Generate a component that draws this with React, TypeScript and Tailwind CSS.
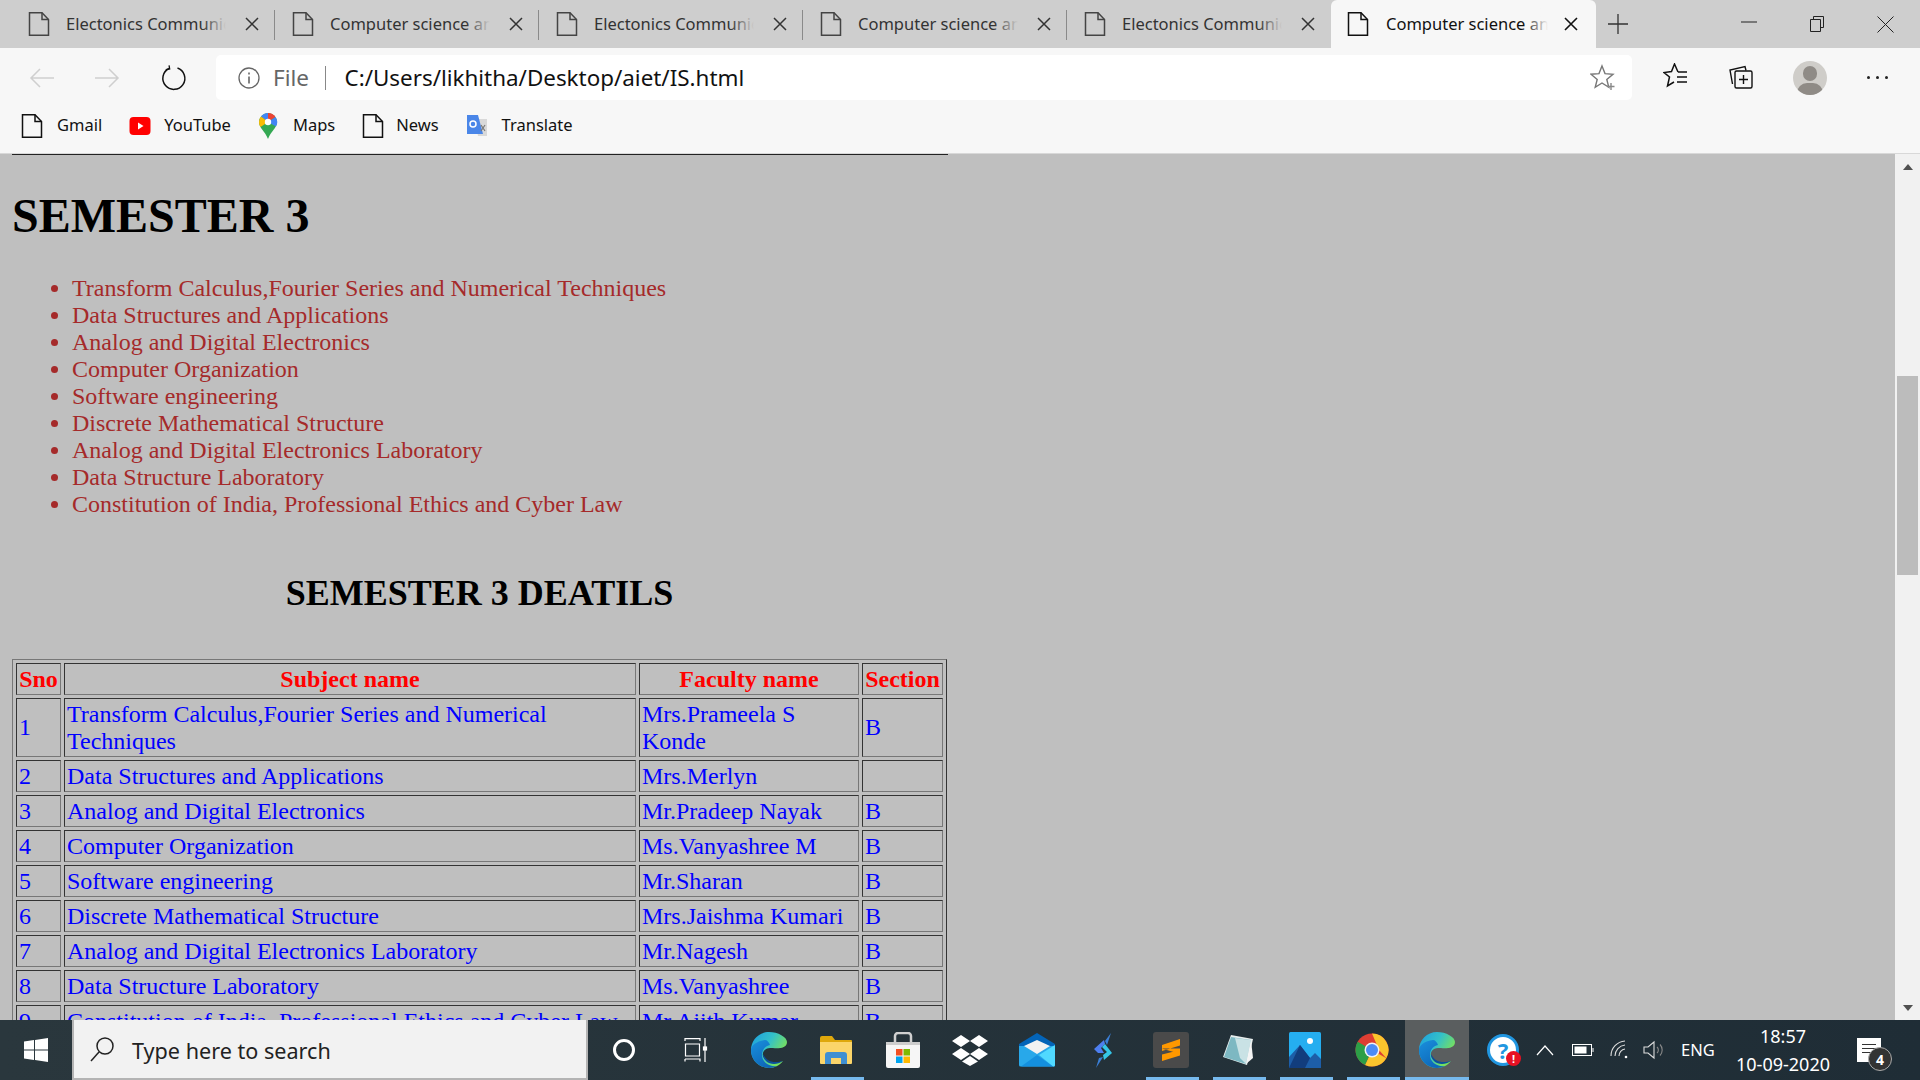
import type { ReactNode } from "react";

const uiFont = "font-['Noto_Sans',sans-serif]";

const subjects = [
  "Transform Calculus,Fourier Series and Numerical Techniques",
  "Data Structures and Applications",
  "Analog and Digital Electronics",
  "Computer Organization",
  "Software engineering",
  "Discrete Mathematical Structure",
  "Analog and Digital Electronics Laboratory",
  "Data Structure Laboratory",
  "Constitution of India, Professional Ethics and Cyber Law",
];

const rows = [
  { sno: "1", subject: subjects[0], faculty: "Mrs.Prameela S Konde", section: "B" },
  { sno: "2", subject: subjects[1], faculty: "Mrs.Merlyn", section: "" },
  { sno: "3", subject: subjects[2], faculty: "Mr.Pradeep Nayak", section: "B" },
  { sno: "4", subject: subjects[3], faculty: "Ms.Vanyashree M", section: "B" },
  { sno: "5", subject: subjects[4], faculty: "Mr.Sharan", section: "B" },
  { sno: "6", subject: subjects[5], faculty: "Mrs.Jaishma Kumari", section: "B" },
  { sno: "7", subject: subjects[6], faculty: "Mr.Nagesh", section: "B" },
  { sno: "8", subject: subjects[7], faculty: "Ms.Vanyashree", section: "B" },
  { sno: "9", subject: subjects[8], faculty: "Mr.Ajith Kumar", section: "B" },
];

const tabs = [
  "Electonics Communication",
  "Computer science and engineering",
  "Electonics Communication",
  "Computer science and engineering",
  "Electonics Communication",
];

function DocIcon({ color = "#333333", size = 24 }: { color?: string; size?: number }) {
  return (
    <svg width={size} height={size} viewBox="0 0 24 24" fill="none" stroke={color} strokeWidth="1.500">
      <path d="M2.500.8h12.500l6.500 6.700v15.700h-19z" />
      <path d="M15 .8v6.700h6.500" />
    </svg>
  );
}

function Tab({ title, active, last }: { title: string; active?: boolean; last?: boolean }) {
  if (active) {
    return (
      <div className="relative flex h-12 w-[265px] shrink-0 items-center rounded-t-[6px] bg-[#f7f7f7] pl-[15px]">
        <DocIcon color="#111111" />
        <div className="ml-[16px] w-[162px] overflow-hidden whitespace-nowrap text-[16.5px] text-[#111]">{title}</div>
        <div className="absolute left-[193px] top-2 h-8 w-[24px] bg-gradient-to-r from-transparent to-[#f7f7f7]" />
        <svg className="ml-[16px]" width="14" height="14" viewBox="0 0 14 14" stroke="#111" strokeWidth="1.600">
          <path d="M1 1l12 12M13 1L1 13" />
        </svg>
      </div>
    );
  }
  return (
    <div className="relative flex h-12 w-[264px] shrink-0 items-center pl-[16px]">
      <DocIcon color="#444444" />
      <div className="ml-[15px] w-[160px] overflow-hidden whitespace-nowrap text-[16.5px] text-[#333]">{title}</div>
      <div className="absolute left-[191px] top-2 h-8 w-[24px] bg-gradient-to-r from-transparent to-[#cecece]" />
      <svg className="ml-[19px]" width="14" height="14" viewBox="0 0 14 14" stroke="#333" strokeWidth="1.500">
        <path d="M1 1l12 12M13 1L1 13" />
      </svg>
      {!last && <div className="absolute right-0 top-[10px] h-[30px] w-px bg-[#8a8a8a]" />}
    </div>
  );
}

function TabStrip() {
  return (
    <div className={`flex h-12 shrink-0 items-center bg-[#cecece] pl-[11px] ${uiFont}`}>
      {tabs.map((t, i) => (
        <Tab key={i} title={t} last={i === tabs.length - 1} />
      ))}
      <Tab title="Computer science and engineering" active />
      <svg className="ml-[12px]" width="20" height="20" viewBox="0 0 20 20" stroke="#333" strokeWidth="1.300">
        <path d="M10 0v20M0 10h20" />
      </svg>
      <div className="ml-auto flex items-center">
        <div className="flex w-[68px] justify-center pr-[2px]">
          <svg width="16" height="16" viewBox="0 0 16 16" stroke="#222" strokeWidth="1">
            <path d="M0 6h16" />
          </svg>
        </div>
        <div className="flex w-[68px] justify-center pr-[2px]">
          <svg width="16" height="18" viewBox="0 0 16 18" fill="none" stroke="#222" strokeWidth="1">
            <path d="M1.500 4.500h10v12h-10z" />
            <path d="M4.500 4.500v-3h10v11h-3" />
          </svg>
        </div>
        <div className="flex w-[68px] justify-center pr-[1px]">
          <svg width="17" height="17" viewBox="0 0 17 17" stroke="#222" strokeWidth="1">
            <path d="M.5.5l16 16M16.500.5l-16 16" />
          </svg>
        </div>
      </div>
    </div>
  );
}

function Toolbar() {
  return (
    <div className={`flex h-[60px] shrink-0 items-center bg-[#f7f7f7] pb-[1px] ${uiFont}`}>
      <div className="flex w-[216px] shrink-0 items-center">
        <svg className="ml-[29px]" width="26" height="22" viewBox="0 0 26 22" fill="none" stroke="#cfcfcf" strokeWidth="1.500">
          <path d="M25 11H2M11 2l-9 9 9 9" />
        </svg>
        <svg className="ml-[39px]" width="26" height="22" viewBox="0 0 26 22" fill="none" stroke="#cfcfcf" strokeWidth="1.500">
          <path d="M1 11h23M15 2l9 9-9 9" />
        </svg>
        <svg className="ml-[41px]" width="26" height="26" viewBox="0 0 26 26" fill="none" stroke="#111" strokeWidth="1.500">
          <path d="M8 3.500a11 11 0 1 0 8.500-.5" />
          <path d="M8.500 0.500v3.500h-4" strokeWidth="1.300" transform="rotate(-10 8 3)" />
        </svg>
      </div>
      <div className="flex h-[45px] w-[1416px] shrink-0 items-center rounded-[5px] bg-white pl-[21px] pr-[16px]">
        <svg width="24" height="24" viewBox="0 0 24 24" fill="none" stroke="#666" strokeWidth="1.300">
          <circle cx="12" cy="12" r="10" />
          <path d="M12 10.500v7M12 6.500v2" strokeWidth="1.600" />
        </svg>
        <span className="ml-[12px] text-[22.5px] text-[#666]">File</span>
        <div className="ml-[16px] h-[24px] w-[1.5px] bg-[#888]" />
        <span className="ml-[18px] whitespace-nowrap text-[22.4px] text-[#111]">C:/Users/likhitha/Desktop/aiet/IS.html</span>
        <svg className="ml-auto -mt-[2px]" width="26" height="26" viewBox="0 0 26 26" fill="none" stroke="#777" strokeWidth="1.400">
          <path d="M12 2l3 7.600 8 .6-6.200 5.200 2 7.900L12 19l-6.800 4.300 2-7.900L1 10.200l8-.6z" />
          <path d="M21 19v7M17.500 22.500h7" stroke="#888" />
        </svg>
      </div>
      <svg className="ml-[31px] -mt-[3px]" width="26" height="26" viewBox="0 0 26 26" fill="none" stroke="#111" strokeWidth="1.500">
        <path d="M15 9L11.500 1 8.500 8.500 1 9.500 6.500 14 4.500 23 11 19" />
        <path d="M15 9h9M14 14h10M14 19h10" />
      </svg>
      <svg className="ml-[40px] -mt-[2px]" width="24" height="26" viewBox="0 0 24 26" fill="none" stroke="#111" strokeWidth="1.400">
        <path d="M3.500 20L1 6l15-3.500 1 4" />
        <rect x="6" y="7" width="17" height="17" rx="1.500" />
        <path d="M14.500 11v9M10 15.500h9" />
      </svg>
      <div className="relative ml-[40px] h-[34px] w-[34px] overflow-hidden rounded-full bg-[#cfcdc9]">
        <div className="absolute left-[10px] top-[5px] h-[15px] w-[14px] rounded-full bg-[#8f8b86]" />
        <div className="absolute left-[4px] top-[22px] h-[20px] w-[26px] rounded-full bg-[#8f8b86]" />
      </div>
      <div className="ml-[40px] flex gap-[6px]">
        <div className="h-[3px] w-[3px] rounded-full bg-[#222]" />
        <div className="h-[3px] w-[3px] rounded-full bg-[#222]" />
        <div className="h-[3px] w-[3px] rounded-full bg-[#222]" />
      </div>
    </div>
  );
}

function Bookmark({ icon, label, gap }: { icon: ReactNode; label: string; gap: string }) {
  return (
    <div className="flex items-center">
      {icon}
      <span className={`${gap} text-[16.5px] text-[#111]`}>{label}</span>
    </div>
  );
}

function Bookmarks() {
  return (
    <div className={`flex h-[46px] shrink-0 items-center gap-[26px] border-b border-[#d8d8d8] bg-[#f7f7f7] pb-[10px] pl-[20px] ${uiFont}`}>
      <Bookmark icon={<DocIcon color="#111111" />} label="Gmail" gap="ml-[13px]" />
      <Bookmark
        icon={
          <svg width="24" height="20" viewBox="0 0 24 20">
            <rect x="1.500" y="1" width="21" height="18" rx="4" fill="#f00" />
            <path d="M10 6.500l5.500 3.500-5.500 3.500z" fill="#fff" />
          </svg>
        }
        label="YouTube"
        gap="ml-[12px]"
      />
      <Bookmark
        icon={
          <svg width="22" height="28" viewBox="0 0 22 28">
            <path d="M11 1a9 9 0 0 1 9 9c0 6-6 9-9 17-3-8-9-11-9-17a9 9 0 0 1 9-9z" fill="#34a853" />
            <path d="M4 4.500A9 9 0 0 1 11 1v9z" fill="#4285f4" />
            <path d="M11 1a9 9 0 0 1 7.500 4l-7.500 5z" fill="#ea4335" />
            <path d="M18.500 5a9 9 0 0 1 .5 9.500L11 10z" fill="#4285f4" />
            <path d="M2 10a9 9 0 0 1 2-5.500L11 10l-7.500 5A9 9 0 0 1 2 10z" fill="#fbbc04" />
            <circle cx="11" cy="10" r="3.200" fill="#fff" />
          </svg>
        }
        label="Maps"
        gap="ml-[14px]"
      />
      <Bookmark icon={<DocIcon color="#111111" />} label="News" gap="ml-[11px]" />
      <Bookmark
        icon={
          <svg width="24" height="26" viewBox="0 0 24 26">
            <path d="M10 6h12v17H13z" fill="#d9d9d9" />
            <path d="M2 2h11l5 19H2z" fill="#4a86e8" />
            <circle cx="8" cy="11" r="3" fill="none" stroke="#fff" strokeWidth="1.500" />
            <path d="M16 12l4 6M20 12l-4 6" stroke="#777" strokeWidth="1.200" />
          </svg>
        }
        label="Translate"
        gap="ml-[13px]"
      />
    </div>
  );
}

function Cell({ children, head }: { children?: ReactNode; head?: boolean }) {
  const Tag = head ? "th" : "td";
  return (
    <Tag
      className={`border border-t-[#333] border-l-[#333] border-r-[#777] border-b-[#777] px-[2px] py-[1.5px] leading-[27px] ${
        head ? "text-center font-bold text-[#f00]" : "text-left font-normal text-[#00f]"
      }`}
    >
      {children}
    </Tag>
  );
}

function PageContent() {
  return (
    <div className="h-full flex-1 overflow-hidden bg-[#bfbfbf] pl-3 font-['Liberation_Serif',serif] text-black">
      <div className="h-px w-[936px] bg-[#222]" />
      <h1 className="mt-[33px] text-[48px] font-bold leading-[55px]">SEMESTER 3</h1>
      <ul className="mt-[32px] list-disc pl-[60px] text-[24px] leading-[27px] text-[#a52a2a]">
        {subjects.map((s) => (
          <li key={s}>{s}</li>
        ))}
      </ul>
      <h2 className="mb-[45px] mt-[55px] w-[935px] text-center text-[36px] font-bold leading-[41px]">SEMESTER 3 DEATILS</h2>
      <table className="w-[935px] table-fixed border-separate border-spacing-[3px] border border-t-[#777] border-l-[#777] border-r-[#333] border-b-[#333] text-[24px]">
        <colgroup>
          <col className="w-[45px]" />
          <col className="w-[572px]" />
          <col className="w-[220px]" />
          <col className="w-[81px]" />
        </colgroup>
        <thead>
          <tr>
            <Cell head>Sno</Cell>
            <Cell head>Subject name</Cell>
            <Cell head>Faculty name</Cell>
            <Cell head>Section</Cell>
          </tr>
        </thead>
        <tbody>
          {rows.map((r) => (
            <tr key={r.sno}>
              <Cell>{r.sno}</Cell>
              <Cell>{r.subject}</Cell>
              <Cell>{r.faculty}</Cell>
              <Cell>{r.section}</Cell>
            </tr>
          ))}
        </tbody>
      </table>
    </div>
  );
}

function Scrollbar() {
  return (
    <div className="flex h-full w-[25px] shrink-0 flex-col items-center bg-[#f1f1f1]">
      <div className="mt-[10px] h-0 w-0 border-x-[5px] border-b-[6px] border-x-transparent border-b-[#505050]" />
      <div className="mt-[206px] h-[199px] w-[21px] bg-[#bcbcbc]" />
      <div className="mt-auto mb-[9px] h-0 w-0 border-x-[5px] border-t-[6px] border-x-transparent border-t-[#505050]" />
    </div>
  );
}

function EdgeIcon() {
  return (
    <svg width="36" height="36" viewBox="0 0 36 36">
      <defs>
        <linearGradient id="edgeTop" x1="0" y1="0" x2="1" y2="0.600">
          <stop offset="0" stopColor="#1b9de2" />
          <stop offset="0.500" stopColor="#34c1c8" />
          <stop offset="0.900" stopColor="#78e05c" />
        </linearGradient>
        <linearGradient id="edgeLeft" x1="0" y1="0" x2="0.600" y2="1">
          <stop offset="0" stopColor="#1a90dd" />
          <stop offset="1" stopColor="#0d66b8" />
        </linearGradient>
      </defs>
      <path d="M18 0C8 0 0 8 0 18c0 10 8 18 18 18 6 0 11-3 14-7-6 3-17 3-20-5-1-4 2-8 7-8 5 0 17 2 17-6C36 5 27 0 18 0z" fill="url(#edgeTop)" />
      <path d="M14 8C6 9 0 13 0 18c0 10 8 18 18 18 3 0 6-1 8-2-8 1-15-4-15-11 0-5 3-9 8-10-1-3-3-5-5-5z" fill="url(#edgeLeft)" />
      <path d="M12 22c0 6 5 10 11 10 3 0 6-1 9-3-4 1-11 2-15-1-3-2-5-6-5-6z" fill="#0b4f9c" />
    </svg>
  );
}

function Slot({ children, running, width = "w-[67px]", active, className = "" }: { children: ReactNode; running?: boolean; width?: string; active?: boolean; className?: string }) {
  return (
    <div className={`relative flex h-[60px] shrink-0 items-center justify-center ${width} ${active ? "bg-[#5a5e5f]" : ""} ${className}`}>
      {children}
      {running && <div className={`absolute bottom-0 h-[3px] bg-[#76b9ed] ${active ? "inset-x-0" : "left-[9px] right-[5px]"}`} />}
    </div>
  );
}

function Taskbar() {
  return (
    <div className={`flex h-[60px] shrink-0 items-center bg-gradient-to-r from-[#2a373d] to-[#1f2d36] text-white ${uiFont}`}>
      <div className="flex h-full w-[72px] shrink-0 items-center justify-center">
        <svg width="24" height="24" viewBox="0 0 24 24" fill="#fff">
          <path d="M0 3.500l10-1.400v9.300H0zM11 2l13-2v11.400H11zM0 12.500h10v9.400l-10-1.400zM11 12.500h13V24l-13-1.900z" />
        </svg>
      </div>
      <div className="flex h-full w-[516px] shrink-0 items-center border-2 border-b-[2px] border-t-0 border-[#b4b4b4] bg-[#f2f2f2] pl-[16px]">
        <svg width="26" height="26" viewBox="0 0 26 26" fill="none" stroke="#222" strokeWidth="1.500">
          <circle cx="15" cy="10" r="8" />
          <path d="M9 16L1 25" />
        </svg>
        <span className="ml-[16px] mt-[4px] text-[21.6px] text-[#222]">Type here to search</span>
      </div>
      <Slot width="w-[72px]">
        <div className="h-[22px] w-[22px] rounded-full border-[3px] border-white" />
      </Slot>
      <Slot width="w-[72px]">
        <svg width="24" height="24" viewBox="0 0 24 24" fill="none" stroke="#fff" strokeWidth="1.200">
          <path d="M1 3V.6h15V3M1.500 6h14v12h-14zM1 21v2.400M1 21h15v2.400M21 0v24" />
          <rect x="19.500" y="9" width="3" height="3" fill="#fff" />
        </svg>
      </Slot>
      <Slot className="ml-[3px]">
        <EdgeIcon />
      </Slot>
      <Slot running>
        <svg width="34" height="30" viewBox="0 0 34 30">
          <path d="M1 3a2 2 0 0 1 2-2h10l3 4h16a1 1 0 0 1 1 1v4H1z" fill="#dfa80c" />
          <path d="M1 7h32v21a1 1 0 0 1-1 1H2a1 1 0 0 1-1-1z" fill="#fbd56a" />
          <path d="M6 29V20a3 3 0 0 1 3-3h16a3 3 0 0 1 3 3v9h-6v-6H12v6z" fill="#3f8fd2" />
        </svg>
      </Slot>
      <Slot>
        <svg width="36" height="36" viewBox="0 0 36 36">
          <path d="M10 11V4a3 3 0 0 1 3-3h10a3 3 0 0 1 3 3v7" fill="none" stroke="#d0d0d0" strokeWidth="2.500" />
          <path d="M1 10h34v24a2 2 0 0 1-2 2H3a2 2 0 0 1-2-2z" fill="#f6f6f6" />
          <path d="M1 10h34v3H1z" fill="#cdcdcd" />
          <rect x="11" y="17" width="6.500" height="6.500" fill="#f25022" />
          <rect x="18.500" y="17" width="6.500" height="6.500" fill="#7fba00" />
          <rect x="11" y="24.500" width="6.500" height="6.500" fill="#00a4ef" />
          <rect x="18.500" y="24.500" width="6.500" height="6.500" fill="#ffb900" />
        </svg>
      </Slot>
      <Slot>
        <svg width="36" height="32" viewBox="0 0 36 32" fill="#fff">
          <path d="M9 1l9 6-9 6-9-6zM27 1l9 6-9 6-9-6zM9 14l9 6-9 6-9-6zM27 14l9 6-9 6-9-6z" />
          <path d="M18 22l8 5.500-8 4.500-8-4.500z" />
        </svg>
      </Slot>
      <Slot>
        <svg width="36" height="34" viewBox="0 0 36 34">
          <rect y="11" width="36" height="22.500" rx="1.500" fill="#28a8ea" />
          <path d="M0 11L18 0l18 11v2H0z" fill="#0364b8" />
          <path d="M5 13l13-6 13 6-13 8z" fill="#f2f2f2" />
          <path d="M36 12v20a1.500 1.500 0 0 1-1.500 1.500H34L20 22z" fill="#50d9ff" />
          <path d="M2 33.500L18 22l16 11.500z" fill="#1490df" />
        </svg>
      </Slot>
      <Slot>
        <svg width="20" height="36" viewBox="0 0 20 36">
          <path d="M17 1l-6 8 2 4z" fill="#3b7fd6" />
          <path d="M10 8L0 17l4 4h6l-3-5 4-4z" fill="#4d7ff0" />
          <path d="M11 12l7 9-8 7-1-5 4-3-5-5z" fill="#35c6e8" />
          <path d="M9 25L2 36l3-10z" fill="#3b7fd6" />
        </svg>
      </Slot>
      <Slot running>
        <div className="flex h-9 w-9 items-center justify-center rounded-[3px] bg-[#4a4a4a]">
          <svg width="20" height="24" viewBox="0 0 20 24" fill="#ff9800">
            <path d="M19 1v6.500L1 13V7zM1 10.500l18 5.500v-5.500zM1 16.500V23l18-5.500V12z" />
          </svg>
        </div>
      </Slot>
      <Slot running>
        <svg width="32" height="32" viewBox="0 0 32 32">
          <path d="M9 1l22 4-6 26-24-8z" fill="#e8eeee" />
          <path d="M9 3l20 3-5 24L2 23z" fill="#7db8c2" />
          <path d="M13 4l16 2-5 24-6-6z" fill="#c9e2e5" />
          <path d="M29 6l2 18-7 6z" fill="#f4f4f4" />
        </svg>
      </Slot>
      <Slot running>
        <svg width="32" height="36" viewBox="0 0 32 36">
          <rect width="32" height="36" rx="1.500" fill="#25aef0" />
          <path d="M0 36V25L11 13l10 13 5-5 6 6v9z" fill="#1d5ea8" />
          <path d="M11 13l10 13-5 10H0z" fill="#123d7d" />
          <circle cx="21" cy="9" r="3" fill="#fff" />
        </svg>
      </Slot>
      <Slot running>
        <svg width="34" height="34" viewBox="0 0 34 34">
          <circle cx="17" cy="17" r="16.500" fill="#de3e33" />
          <path d="M17 17L31.300 25.250A16.500 16.500 0 0 1 10 32z" fill="#fbc52d" />
          <path d="M17 17L10 32A16.500 16.500 0 0 1 2.700 8.750z" fill="#2c9f47" />
          <path d="M17 .5a16.500 16.500 0 0 1 14.300 24.750L24 17z" fill="#fbc52d" />
          <circle cx="17" cy="17" r="7.500" fill="#f2f2f2" />
          <circle cx="17" cy="17" r="6" fill="#4c8bf5" />
        </svg>
      </Slot>
      <Slot running active width="w-[64px]">
        <EdgeIcon />
      </Slot>
      <div className="relative ml-[18px] flex h-8 w-8 shrink-0 items-center justify-center rounded-full border-[3px] border-[#2196e0] bg-white text-[22px] font-bold leading-none text-[#2196e0]">
        ?
        <div className="absolute -bottom-[3px] -right-[5px] flex h-[15px] w-[15px] items-center justify-center rounded-full bg-[#e81123] text-[11px] font-bold text-white">!</div>
      </div>
      <svg className="ml-[17px]" width="18" height="12" viewBox="0 0 18 12" fill="none" stroke="#fff" strokeWidth="1.200">
        <path d="M1 11l8-9 8 9" />
      </svg>
      <svg className="ml-[18px]" width="22" height="12" viewBox="0 0 22 12" fill="none" stroke="#fff">
        <rect x="0.500" y="0.500" width="19" height="11" />
        <rect x="2.500" y="2.500" width="12" height="7" fill="#fff" stroke="none" />
        <path d="M21 4v4" />
      </svg>
      <svg className="ml-[16px]" width="20" height="20" viewBox="0 0 20 20" fill="none" stroke="#ddd" strokeWidth="1.100">
        <path d="M1 16A15 15 0 0 1 15 1M5 16A11 11 0 0 1 15 5M9 16a7 7 0 0 1 6-7" />
        <circle cx="16" cy="17" r="1.300" fill="#fff" stroke="none" />
      </svg>
      <svg className="ml-[13px]" width="22" height="20" viewBox="0 0 22 20" fill="none" stroke="#ddd" strokeWidth="1.100">
        <path d="M1 7h4l6-5v16l-6-5H1z" />
        <path d="M14 7a4 4 0 0 1 0 6M17 4.500a8 8 0 0 1 0 11" stroke="#888" />
      </svg>
      <span className="ml-[16px] w-[34px] whitespace-nowrap text-[16.5px]">ENG</span>
      <div className="ml-[20px] flex w-[96px] flex-col items-center text-[18px] leading-[28px]">
        <span>18:57</span>
        <span className="whitespace-nowrap">10-09-2020</span>
      </div>
      <div className="relative ml-[26px] h-[24px] w-[24px] bg-white">
        <div className="mx-[5px] mt-[6px] h-px bg-[#333]" />
        <div className="mx-[5px] mt-[3px] h-px bg-[#333]" />
        <div className="mx-[5px] mt-[3px] h-px bg-[#333]" />
        <div className="absolute -bottom-[9px] -right-[11px] flex h-[24px] w-[24px] items-center justify-center rounded-full border border-[#aaa] bg-[#333] text-[14px] font-bold">4</div>
      </div>
    </div>
  );
}

export default function App() {
  return (
    <div className="flex h-screen w-screen flex-col overflow-hidden">
      <TabStrip />
      <Toolbar />
      <Bookmarks />
      <div className="flex min-h-0 flex-1">
        <PageContent />
        <Scrollbar />
      </div>
      <Taskbar />
    </div>
  );
}
